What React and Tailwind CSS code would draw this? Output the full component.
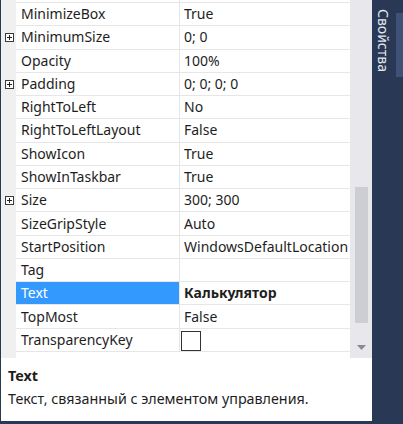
import React from "react";

const rows = [
  { name: "MinimizeBox", value: "True" },
  { name: "MinimumSize", value: "0; 0", expand: true },
  { name: "Opacity", value: "100%" },
  { name: "Padding", value: "0; 0; 0; 0", expand: true },
  { name: "RightToLeft", value: "No" },
  { name: "RightToLeftLayout", value: "False" },
  { name: "ShowIcon", value: "True" },
  { name: "ShowInTaskbar", value: "True" },
  { name: "Size", value: "300; 300", expand: true },
  { name: "SizeGripStyle", value: "Auto" },
  { name: "StartPosition", value: "WindowsDefaultLocation" },
  { name: "Tag", value: "" },
  { name: "Text", value: "Калькулятор", selected: true },
  { name: "TopMost", value: "False" },
  { name: "TransparencyKey", color: true },
];

function PlusBox() {
  return (
    <span className="w-[9px] h-[9px] border border-[#3a3a3a] bg-white flex items-center justify-center">
      <svg width="7" height="7" viewBox="0 0 7 7">
        <path d="M1 3.5H6M3.5 1V6" stroke="#222" strokeWidth="1" />
      </svg>
    </span>
  );
}

function Row({ row }) {
  return (
    <div className="flex h-[23.27px] shrink-0">
      <div className="w-[15px] shrink-0 bg-[#f0f0f0] flex items-center pl-[4px]">
        {row.expand && <PlusBox />}
      </div>
      <div className="flex-1 flex border-b border-[#e6e6e6]">
        <div
          className={`w-[164px] shrink-0 border-r border-[#e6e6e6] pl-[5px] flex items-center ${
            row.selected ? "bg-[#3399ff] text-white" : "text-[#1e1e1e]"
          }`}
        >
          {row.name}
        </div>
        <div className="flex-1 pl-[4px] flex items-center whitespace-nowrap overflow-hidden text-[#1e1e1e]">
          {row.color ? (
            <span className="ml-[-3px] mt-[2px] w-[20px] h-[20px] border border-[#333] bg-white" />
          ) : row.selected ? (
            <span className="font-bold">{row.value}</span>
          ) : (
            row.value
          )}
        </div>
      </div>
    </div>
  );
}

export default function App() {
  return (
    <div
      className="w-[403px] h-[424px] flex bg-[#293955] overflow-hidden text-[14px] leading-none"
      style={{ fontFamily: '"Noto Sans", "Open Sans", sans-serif' }}
    >
      <div className="w-[372px] shrink-0 flex flex-col pl-px pb-[3px]">
        <div className="flex h-[358px] shrink-0 bg-white">
          <div className="w-[349px] shrink-0 flex flex-col overflow-hidden">
            <div className="h-[3px] shrink-0 flex">
              <div className="w-[15px] bg-[#f0f0f0]" />
              <div className="flex-1 flex border-b border-[#e6e6e6]">
                <div className="w-[164px] border-r border-[#e6e6e6]" />
              </div>
            </div>
            {rows.map((r) => (
              <Row key={r.name} row={r} />
            ))}
            <div className="flex-1 flex">
              <div className="w-[15px] bg-[#f0f0f0]" />
            </div>
          </div>
          <div className="w-[22px] shrink-0 bg-[#e8e8ec] flex flex-col items-center">
            <div className="mt-[187px] w-[13px] h-[136px] bg-[#cdced4]" />
            <svg className="mt-[22px]" width="9" height="6" viewBox="0 0 9 6">
              <path d="M0 0H9L4.5 5Z" fill="#868999" />
            </svg>
          </div>
        </div>
        <div className="flex-1 bg-white px-[7px] pt-[8px] text-[#1e1e1e] text-[14.3px]">
          <div className="font-bold h-[20px] flex items-center">Text</div>
          <div className="mt-[3px] h-[20px] flex items-center">
            Текст, связанный с элементом управления.
          </div>
        </div>
      </div>
      <div className="flex-1 relative">
        <div
          className="absolute left-[4px] top-[9px] text-[14px] text-[#e3e6ec]"
          style={{ writingMode: "vertical-rl" }}
        >
          Свойства
        </div>
        <div className="absolute left-[24px] top-[13px] w-[8px] h-[64px] bg-[#3f5178]" />
      </div>
    </div>
  );
}
